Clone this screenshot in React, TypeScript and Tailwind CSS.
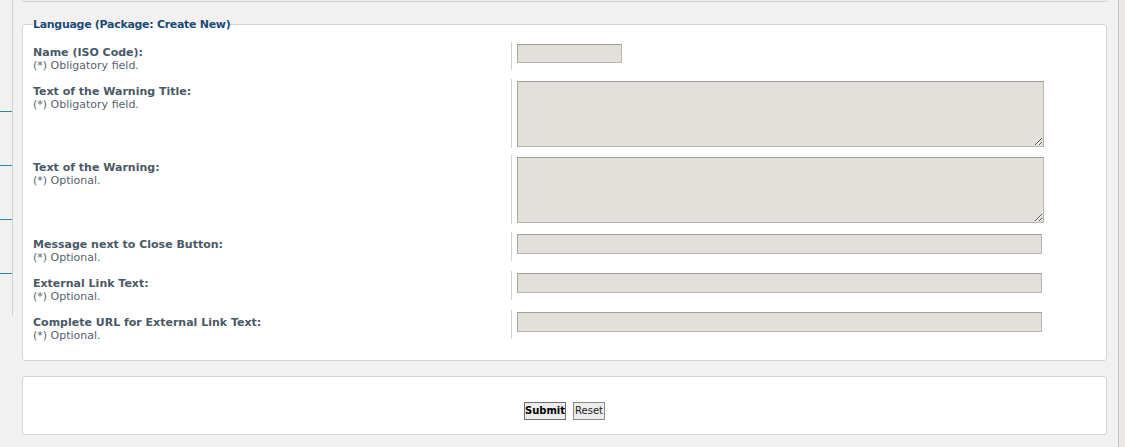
import React from "react";

type Row = {
  label: string;
  note: string;
  kind: "short" | "area" | "text";
  rowClass: string;
  labelPad: string;
};

const rows: Row[] = [
  { label: "Name (ISO Code):", note: "(*) Obligatory field.", kind: "short", rowClass: "h-[28px] mb-[9px]", labelPad: "pt-[4px]" },
  { label: "Text of the Warning Title:", note: "(*) Obligatory field.", kind: "area", rowClass: "h-[69px] mb-[7px]", labelPad: "pt-[6px]" },
  { label: "Text of the Warning:", note: "(*) Optional.", kind: "area", rowClass: "h-[69px] mb-[8px]", labelPad: "pt-[6px]" },
  { label: "Message next to Close Button:", note: "(*) Optional.", kind: "text", rowClass: "h-[29px] mb-[10px]", labelPad: "pt-[6px]" },
  { label: "External Link Text:", note: "(*) Optional.", kind: "text", rowClass: "h-[29px] mb-[10px]", labelPad: "pt-[6px]" },
  { label: "Complete URL for External Link Text:", note: "(*) Optional.", kind: "text", rowClass: "h-[29px]", labelPad: "pt-[6px]" },
];

const fieldCls = "block bg-[#e3dfda] border border-[#b9b5b0] border-t-[#a19e9a] border-l-[#aaa7a3] outline-none";

export default function App() {
  return (
    <div className="w-[1125px] h-[447px] bg-[#f1f1f1] flex overflow-hidden font-['DejaVu_Sans',sans-serif] text-[11px] leading-[13px]">
      {/* left menu stub */}
      <div className="w-[13px] h-[316px] shrink-0 overflow-hidden border-r border-[#d2d2d2] flex flex-col pt-[111px]">
        <div className="h-[54px] shrink-0 border-t border-[#2e86a8]" />
        <div className="h-[54px] shrink-0 border-t border-[#2e86a8]" />
        <div className="h-[54px] shrink-0 border-t border-[#2e86a8]" />
        <div className="h-[54px] shrink-0 border-t border-[#2e86a8]" />
      </div>

      <div className="ml-[9px] w-[1085px] shrink-0 flex flex-col">
        {/* end of previous panel */}
        <div className="h-[2px] border-b border-x border-[#cfcfcf] rounded-b-[3px]" />

        <fieldset className="mt-[15px] bg-white border border-[#d4d4d4] rounded-[3px] pl-[10px] pr-[10px] pb-[21px]">
          <legend className="font-bold text-[#1c4a78] leading-[15px] tracking-[-0.3px]">Language (Package: Create New)</legend>
          <div className="mt-[10px] flex flex-col">
            {rows.map((r) => (
              <div key={r.label} className={`flex ${r.rowClass}`}>
                <div className={`w-[478px] shrink-0 ${r.labelPad}`}>
                  <div className="font-bold text-[#4b5866]">{r.label}</div>
                  <div className="text-[#58626d]">{r.note}</div>
                </div>
                <div className="border-l border-[#d0d0d0] pl-[5px] pt-[2px]">
                  {r.kind === "short" && <input type="text" className={`${fieldCls} w-[105px] h-[19px]`} />}
                  {r.kind === "area" && <textarea className={`${fieldCls} w-[527px] h-[66px]`} />}
                  {r.kind === "text" && <input type="text" className={`${fieldCls} w-[525px] h-[20px]`} />}
                </div>
              </div>
            ))}
          </div>
        </fieldset>

        <div className="mt-[15px] h-[59px] bg-white border border-[#d4d4d4] rounded-[3px] flex items-center justify-center gap-[7px] pt-[11px]">
          <button type="button" className="h-[18px] px-0 bg-[#ececec] border border-[#6f6f6f] font-bold text-[10px] leading-[14px] text-black">
            Submit
          </button>
          <button type="button" className="h-[18px] px-[1px] bg-[#ececec] border border-[#8a8a8a] text-[10px] leading-[14px] text-[#222]">
            Reset
          </button>
        </div>
      </div>

      {/* right scrollbar edge */}
      <div className="ml-[11px] flex-1 border-l border-[#c4c4c4] bg-[#ebe8e5]" />
    </div>
  );
}
